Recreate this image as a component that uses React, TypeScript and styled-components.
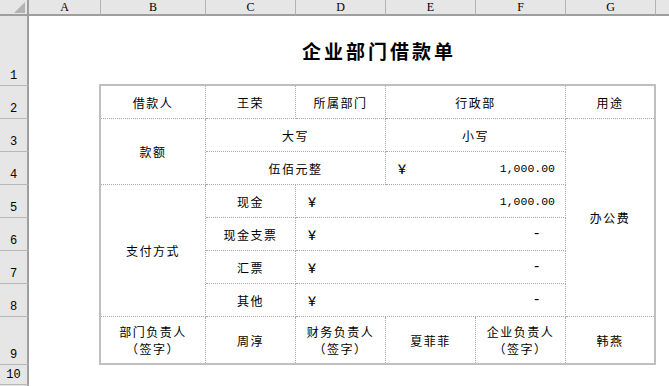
import React from "react";
import styled, { createGlobalStyle } from "styled-components";

const Global = createGlobalStyle`
  html, body { margin: 0; padding: 0; background: #ffffff; overflow: hidden; }
  #root { width: 669px; height: 386px; }
`;

const CJK = `"Noto Sans CJK SC", "Noto Sans", sans-serif`;

const Sheet = styled.div`
  display: grid;
  grid-template-columns: 29px 71px 105px 90px 90px 90px 90px 90px 1fr;
  grid-template-rows: 16px 69px repeat(7, 33px) 48px 20px 1fr;
  width: 669px;
  height: 386px;
  background: #ffffff;
`;

const Corner = styled.div`
  grid-column: 1;
  grid-row: 1;
  position: relative;
  background: #e6e6e6;
  border-right: 2px solid #9e9e9e;
  border-bottom: 2px solid #9e9e9e;
  box-sizing: border-box;
  &::after {
    content: "";
    position: absolute;
    right: 2px;
    bottom: 1px;
    width: 0;
    height: 0;
    border-style: solid;
    border-width: 0 0 11px 11px;
    border-color: transparent transparent #b4b4b4 transparent;
  }
`;

const ColHead = styled.div<{ $col: number; $sep?: boolean }>`
  grid-column: ${(p) => p.$col};
  grid-row: 1;
  background: #e6e6e6;
  border-bottom: 2px solid #9e9e9e;
  border-left: ${(p) => (p.$sep ? "1px solid #b3b3b3" : "none")};
  box-sizing: border-box;
  display: flex;
  align-items: center;
  justify-content: center;
  font-family: "Liberation Serif", serif;
  font-size: 12px;
  color: #000;
  line-height: 1;
  padding-bottom: 1px;
`;

const RowHead = styled.div<{ $row: number; $sep?: boolean }>`
  grid-column: 1;
  grid-row: ${(p) => p.$row};
  background: #e6e6e6;
  border-right: 2px solid #9e9e9e;
  border-top: ${(p) => (p.$sep ? "1px solid #b8b8b8" : "none")};
  box-sizing: border-box;
  display: flex;
  align-items: flex-end;
  justify-content: center;
  font-family: "Liberation Mono", monospace;
  font-size: 12px;
  line-height: 1;
  color: #000;
  padding-bottom: 3px;
`;

const Title = styled.div`
  grid-column: 3 / 9;
  grid-row: 2;
  display: flex;
  align-items: center;
  justify-content: center;
  padding-left: 3px;
  font-family: ${CJK};
  font-weight: 700;
  font-size: 19px;
  letter-spacing: 3px;
  color: #000;
`;

const Table = styled.div`
  grid-column: 3 / 9;
  grid-row: 3 / 11;
  margin: -1px;
  border: 2px solid #bfbfbf;
  display: grid;
  grid-template-columns: 105px 90px 90px 90px 90px 88px;
  grid-template-rows: repeat(7, 33px) 46px;
  background: #fff;
`;

const Cell = styled.div<{
  $col: string;
  $row: string;
  $right?: boolean;
  $bottom?: boolean;
}>`
  grid-column: ${(p) => p.$col};
  grid-row: ${(p) => p.$row};
  box-sizing: border-box;
  border-right: ${(p) => (p.$right === false ? "none" : "1px dotted #a8a8a8")};
  border-bottom: ${(p) => (p.$bottom === false ? "none" : "1px dotted #a8a8a8")};
  display: flex;
  flex-direction: column;
  align-items: center;
  justify-content: center;
  font-family: ${CJK};
  font-size: 12px;
  letter-spacing: 1.5px;
  line-height: 17px;
  color: #000;
  text-align: center;
`;

const Line = styled.span`
  display: block;
  height: 17px;
  line-height: 17px;
`;

const MoneyCell = styled(Cell)`
  flex-direction: row;
  justify-content: space-between;
  align-items: center;
  padding: 0 10px 0 10px;
  font-family: "Liberation Mono", monospace;
  font-size: 11.5px;
  letter-spacing: 0;
`;

const Yen = styled.span`
  font-family: ${CJK};
  font-size: 12px;
  font-weight: 500;
  width: 12px;
  text-align: left;
`;

const Amount = styled.span<{ $dash?: boolean }>`
  padding-right: ${(p) => (p.$dash ? "14px" : "0")};
  font-size: ${(p) => (p.$dash ? "14px" : "11.5px")};
`;

const Money = ({ col, row, value }: { col: string; row: string; value: string }) => (
  <MoneyCell $col={col} $row={row}>
    <Yen>￥</Yen>
    <Amount $dash={value === "-"}>{value}</Amount>
  </MoneyCell>
);

const letters = ["A", "B", "C", "D", "E", "F", "G", ""];

export default function App() {
  return (
    <>
      <Global />
      <Sheet>
        <Corner />
        {letters.map((l, i) => (
          <ColHead key={i} $col={i + 2} $sep={i > 0}>
            {l}
          </ColHead>
        ))}
        {[1, 2, 3, 4, 5, 6, 7, 8, 9, 10, 11].map((n) => (
          <RowHead key={n} $row={n + 1} $sep={n > 1}>
            {n <= 10 ? n : ""}
          </RowHead>
        ))}
        <Title>企业部门借款单</Title>
        <Table>
          <Cell $col="1" $row="1">借款人</Cell>
          <Cell $col="2" $row="1">王荣</Cell>
          <Cell $col="3" $row="1">所属部门</Cell>
          <Cell $col="4 / 6" $row="1">行政部</Cell>
          <Cell $col="6" $row="1" $right={false}>用途</Cell>

          <Cell $col="1" $row="2 / 4">款额</Cell>
          <Cell $col="2 / 4" $row="2">大写</Cell>
          <Cell $col="4 / 6" $row="2">小写</Cell>
          <Cell $col="6" $row="2 / 8" $right={false}>办公费</Cell>
          <Cell $col="2 / 4" $row="3">伍佰元整</Cell>
          <Money col="4 / 6" row="3" value="1,000.00" />

          <Cell $col="1" $row="4 / 8">支付方式</Cell>
          <Cell $col="2" $row="4">现金</Cell>
          <Money col="3 / 6" row="4" value="1,000.00" />
          <Cell $col="2" $row="5">现金支票</Cell>
          <Money col="3 / 6" row="5" value="-" />
          <Cell $col="2" $row="6">汇票</Cell>
          <Money col="3 / 6" row="6" value="-" />
          <Cell $col="2" $row="7">其他</Cell>
          <Money col="3 / 6" row="7" value="-" />

          <Cell $col="1" $row="8" $bottom={false}>
            <Line>部门负责人</Line>
            <Line>（签字）</Line>
          </Cell>
          <Cell $col="2" $row="8" $bottom={false}>周淳</Cell>
          <Cell $col="3" $row="8" $bottom={false}>
            <Line>财务负责人</Line>
            <Line>（签字）</Line>
          </Cell>
          <Cell $col="4" $row="8" $bottom={false}>夏菲菲</Cell>
          <Cell $col="5" $row="8" $bottom={false}>
            <Line>企业负责人</Line>
            <Line>（签字）</Line>
          </Cell>
          <Cell $col="6" $row="8" $bottom={false} $right={false}>韩燕</Cell>
        </Table>
      </Sheet>
    </>
  );
}
